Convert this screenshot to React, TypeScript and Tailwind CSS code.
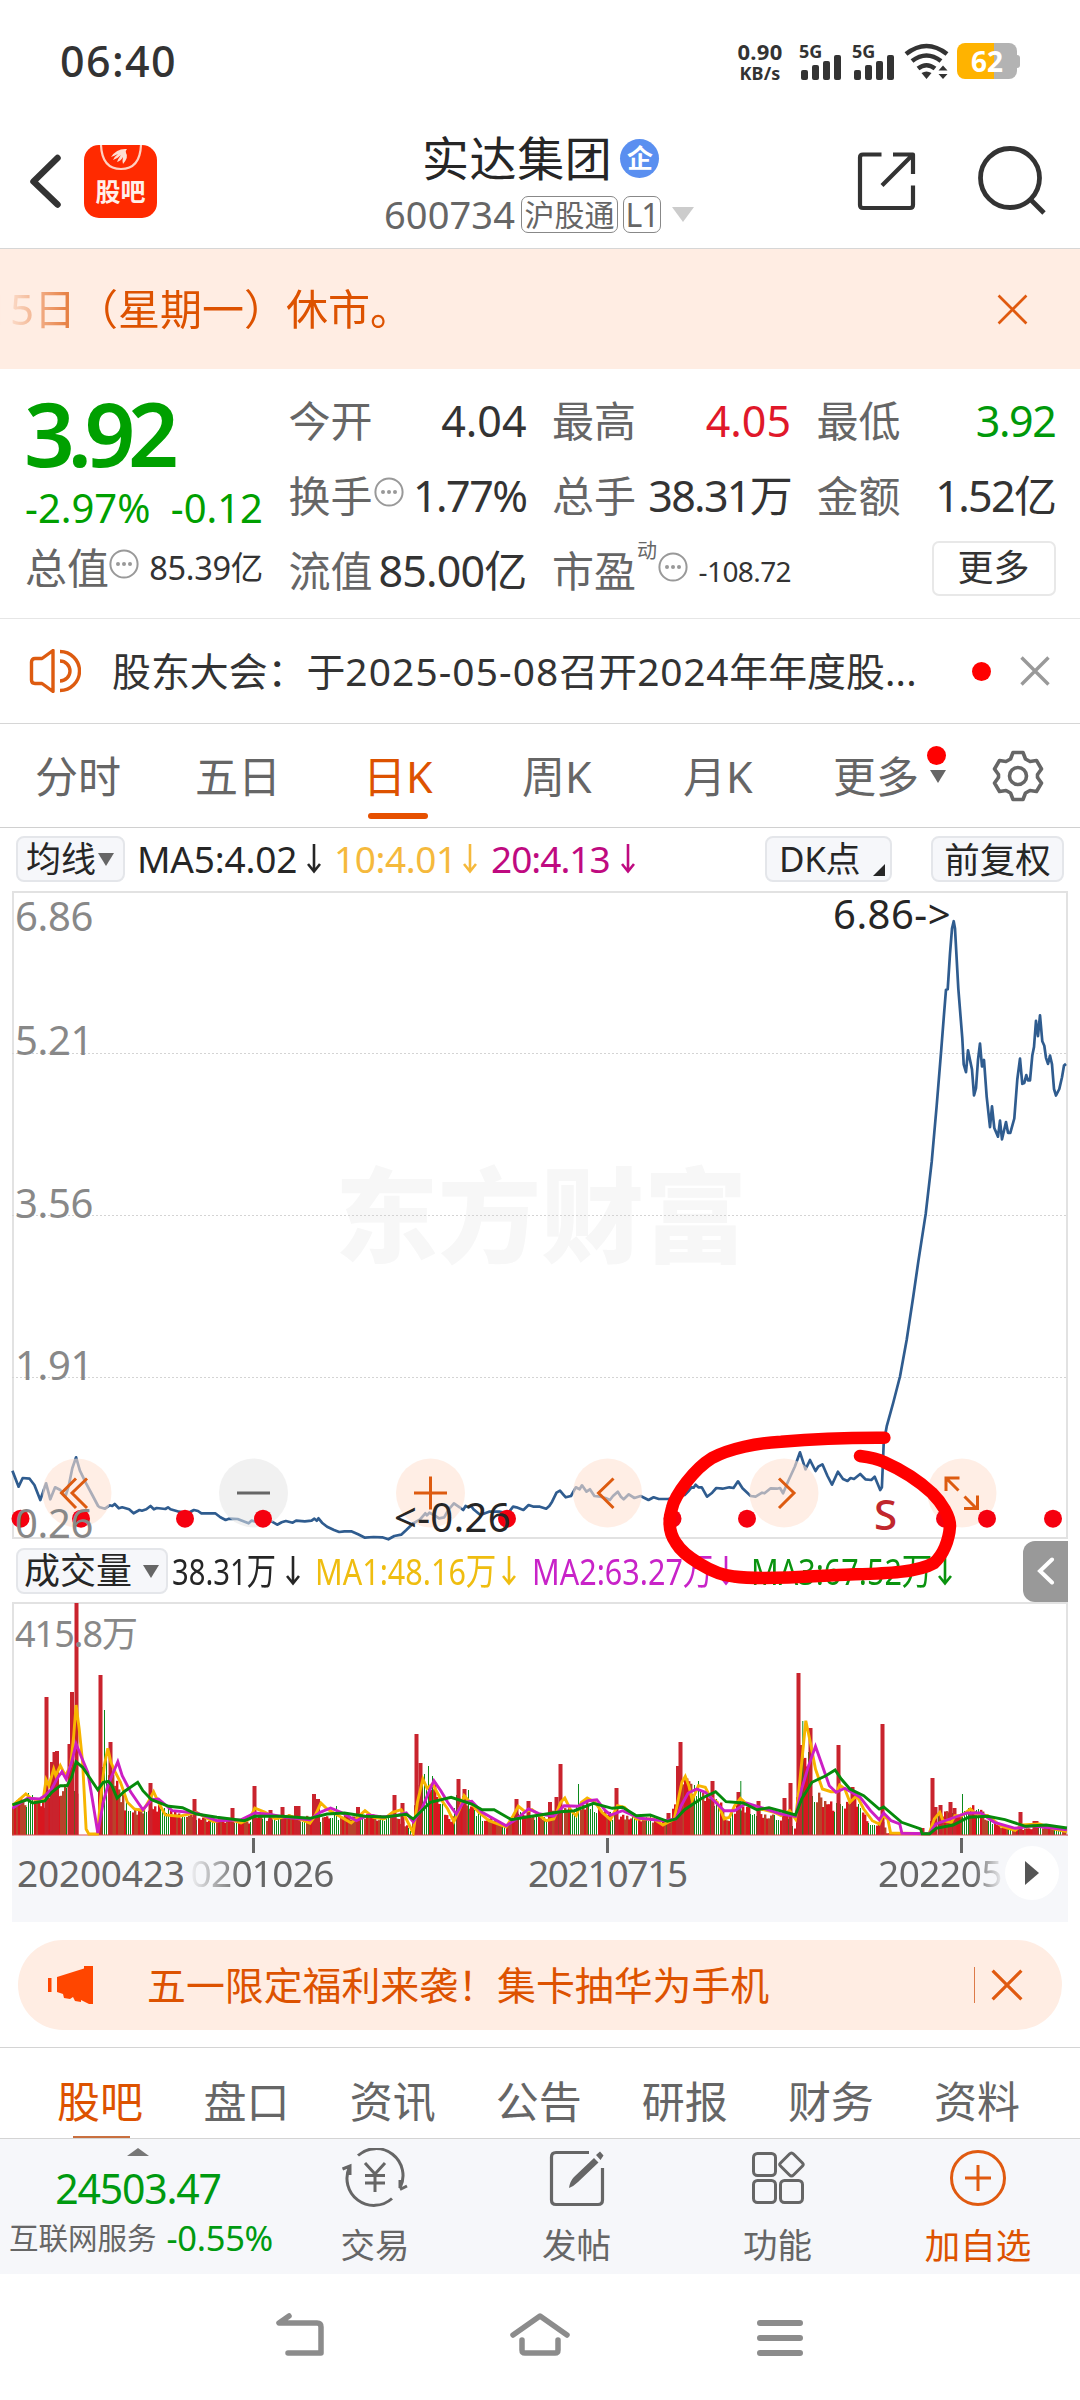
import React from "react";

type Pt = [number, number];

const F = "font-['Noto_Sans','Noto_Sans_CJK_SC',sans-serif]";

// Samples are stored in 2.904 x 3 units per pixel of the panel they belong to.
const left = (p: Pt[], oy: number): Pt[] => p.map(([x, y]) => [x / 2.904 - 12, y / 3 + oy]);
const right = (p: Pt[], oy: number): Pt[] => p.map(([x, y]) => [528 + x / 2.904, y / 3 + oy]);
const join = (p: Pt[]) => p.map(([x, y]) => `${x.toFixed(1)},${y.toFixed(1)}`).join(" ");

const priceA: Pt[] = [[36,212],[54,260],[66,234],[86,236],[100,255],[117,300],[134,250],[146,298],[160,262],[175,270],[190,290],[200,255],[210,205],[221,172],[232,212],[250,250],[268,285],[285,318],[290,322],[305,326],[318,316],[326,318],[333,312],[345,325],[355,322],[375,328],[388,340],[405,330],[412,332],[425,328],[437,318],[447,328],[455,324],[480,327],[488,322],[495,328],[520,335],[545,340],[563,330],[575,333],[585,340],[625,340],[640,352],[655,360],[665,356],[690,357],[722,370],[730,362],[740,364],[760,360],[790,365],[805,374],[818,367],[830,363],[850,368],[860,362],[885,364],[905,362],[913,356],[920,362],[925,355],[935,368],[950,380],[970,390],[985,396],[1000,394],[1020,394],[1040,403],[1060,413],[1085,411],[1110,412],[1128,418],[1145,408],[1165,404],[1180,390],[1200,370],[1220,358],[1235,340],[1240,346],[1247,338],[1262,346],[1275,355],[1290,352],[1302,330],[1318,310],[1335,322],[1345,330],[1352,318],[1360,322],[1368,318],[1375,328],[1395,345],[1420,335],[1450,335],[1475,340],[1490,320],[1500,322],[1520,330],[1535,315],[1550,320],[1568,320]];
const priceB: Pt[] = [[18,326],[27,318],[35,305],[48,278],[58,272],[67,283],[75,292],[90,288],[104,262],[115,268],[122,256],[135,275],[145,268],[158,288],[175,290],[190,294],[203,300],[212,288],[226,275],[235,290],[243,298],[258,283],[274,294],[292,288],[315,300],[330,292],[345,297],[372,297],[395,292],[420,285],[432,272],[440,262],[446,263],[452,254],[460,262],[470,262],[485,290],[500,278],[512,264],[530,266],[550,262],[562,264],[575,244],[588,265],[612,288],[626,290],[645,278],[652,280],[670,265],[688,266],[697,264],[706,280],[720,245],[740,200],[755,157],[771,208],[784,180],[800,213],[808,200],[820,193],[835,228],[848,254],[865,215],[880,237],[893,243],[902,234],[912,237],[930,222],[945,238],[962,240],[972,230],[988,270],[993,262],[998,130]];
const priceC: Pt[] = [[320,1260],[340,1205],[360,1145],[380,1060],[400,960],[415,880],[437,770],[455,650],[470,520],[484,390],[492,310],[498,253],[503,252],[510,170],[516,112],[521,95],[525,112],[535,250],[547,365],[551,425],[558,443],[564,393],[576,437],[582,497],[588,480],[594,415],[600,377],[606,430],[612,415],[620,500],[630,570],[636,522],[643,572],[654,592],[660,555],[666,598],[678,558],[684,583],[691,583],[703,550],[712,460],[720,412],[727,470],[733,468],[739,450],[744,462],[750,462],[757,405],[762,385],[768,325],[774,360],[780,312],[787,372],[793,382],[798,410],[804,424],[810,405],[816,425],[822,482],[828,497],[838,482],[846,455],[852,428],[858,424]];
const price: Pt[] = [
  ...left(priceA, 509),
  ...right(priceB, 509),
  ...priceC.map(([x, y]): Pt => [768 + x / 3, y / 2.306 - 11]),
];

const yellow: Pt[] = [
  ...left([[36,650],[75,615],[90,628],[125,635],[134,572],[142,590],[156,540],[162,560],[175,530],[190,560],[205,530],[214,440],[221,348],[230,420],[240,520],[250,720],[258,735],[283,735],[290,650],[303,530],[313,478],[322,520],[335,550],[350,580],[370,640],[390,660],[415,665],[430,640],[446,608],[460,640],[480,678],[520,682],[570,670],[620,698],[665,690],[700,702],[725,690],[740,657],[770,670],[800,690],[840,680],[870,690],[900,703],[915,680],[932,642],[950,660],[980,678],[1020,702],[1060,665],[1085,685],[1115,690],[1140,670],[1165,662],[1180,690],[1200,732],[1212,640],[1228,570],[1240,598],[1256,585],[1280,630],[1300,660],[1318,698],[1335,660],[1348,620],[1365,640],[1390,670],[1420,695],[1470,714],[1490,680],[1505,652],[1525,668],[1545,662],[1568,680]], -13),
  ...right([[17,695],[40,690],[60,640],[72,627],[90,665],[105,680],[120,640],[137,627],[160,640],[180,670],[205,692],[225,650],[245,655],[280,690],[330,690],[357,708],[390,690],[400,640],[412,580],[422,562],[432,590],[442,633],[460,590],[480,595],[495,625],[515,640],[535,690],[550,685],[565,650],[582,628],[600,645],[640,660],[680,670],[700,680],[725,665],[742,690],[752,600],[762,500],[772,395],[785,460],[800,540],[820,600],[845,608],[862,608],[870,588],[885,600],[900,640],[920,620],[940,660],[965,695],[985,705],[995,680],[1010,690],[1018,732],[1130,734],[1145,690],[1161,670],[1170,695],[1195,700],[1205,680],[1225,680],[1250,660],[1265,675],[1300,680],[1340,712],[1380,724],[1400,708],[1450,705],[1500,722],[1530,728]], -13),
];
const magenta: Pt[] = [
  ...left([[36,658],[80,628],[115,630],[130,620],[150,600],[165,570],[180,548],[192,570],[208,520],[221,465],[235,500],[255,550],[268,630],[284,732],[300,640],[312,595],[325,560],[342,518],[355,560],[380,610],[415,662],[440,632],[460,630],[500,665],[570,672],[630,695],[700,692],[740,672],[780,676],[830,685],[900,692],[930,670],[960,657],[990,670],[1035,695],[1070,678],[1110,684],[1150,680],[1180,672],[1200,698],[1225,660],[1245,610],[1260,575],[1280,605],[1300,640],[1325,675],[1345,640],[1370,637],[1400,670],[1470,710],[1500,690],[1535,660],[1568,675]], -13),
  ...right([[40,682],[70,650],[110,652],[140,635],[165,632],[190,665],[205,678],[240,665],[290,688],[360,695],[395,690],[410,650],[430,612],[455,600],[480,610],[510,640],[535,665],[565,665],[600,642],[640,655],[700,675],[742,682],[760,600],[780,530],[800,472],[815,515],[840,590],[860,610],[885,598],[930,625],[960,665],[985,692],[998,672],[1020,695],[1045,705],[1051,733],[1130,734],[1150,705],[1190,690],[1240,672],[1280,672],[1320,700],[1380,718],[1430,710],[1530,722]], -13),
];
const green: Pt[] = [
  ...left([[36,648],[80,632],[95,642],[130,636],[150,610],[175,590],[195,590],[208,565],[221,518],[240,535],[284,602],[300,580],[315,577],[325,590],[340,628],[360,608],[400,580],[415,605],[440,632],[490,652],[530,656],[570,675],[630,685],[710,695],[740,682],[820,682],[900,688],[950,675],[1000,672],[1060,682],[1120,684],[1180,676],[1200,690],[1250,640],[1310,625],[1370,645],[1400,662],[1435,662],[1485,692],[1530,684],[1568,678]], -13),
  ...right([[60,668],[100,665],[155,643],[210,658],[240,655],[280,680],[320,678],[370,697],[395,690],[420,662],[470,628],[510,608],[540,638],[590,642],[630,662],[665,656],[742,678],[760,630],[790,580],[830,560],[857,543],[875,570],[900,600],[940,620],[985,660],[998,654],[1050,700],[1105,720],[1110,734],[1132,734],[1150,718],[1200,708],[1245,685],[1300,682],[1350,692],[1410,712],[1470,708],[1530,717]], -13),
];

// Volume: a base envelope plus the single-day spikes that stand above it.
const envelope: Pt[] = [[0,33],[12,42],[30,36],[42,38],[50,55],[58,52],[62,66],[65,50],[66.5,0],[85,0],[87,55],[95,80],[103,62],[110,40],[120,26],[132,32],[150,30],[165,22],[200,18],[230,16],[270,20],[300,18],[340,22],[380,18],[390,16],[400,3],[405,60],[418,60],[425,45],[438,16],[446,42],[460,36],[470,20],[495,10],[505,24],[528,18],[545,26],[560,30],[580,32],[600,22],[640,18],[658,14],[666,60],[690,46],[705,42],[716,16],[728,32],[750,24],[775,20],[784,8],[786,80],[795,100],[800,50],[812,34],[830,32],[842,44],[850,30],[860,10],[872,14],[874,2],[918,2],[920,26],[945,24],[960,30],[975,20],[990,8],[1010,6],[1040,9],[1056,7]];
const spikes: [number, number, string][] = [[34.5,138,"r"],[40,73,"r"],[42.5,83,"r"],[45,84,"r"],[57.5,91,"r"],[60,143,"r"],[64.5,232,"r"],[88.5,160,"r"],[92.5,125,"g"],[98.5,93,"r"],[138.5,52,"r"],[182.5,36,"r"],[220.5,27,"r"],[242.5,49,"r"],[258.5,25,"r"],[270.5,28,"r"],[284,29,"r"],[286.5,29,"r"],[302,41,"r"],[306,36,"r"],[324.5,29,"g"],[346,28,"r"],[382.5,40,"r"],[390.5,32,"r"],[404.5,101,"r"],[408.5,72,"r"],[416.5,69,"g"],[420.5,59,"g"],[446.5,56,"r"],[452.5,46,"r"],[456.5,45,"g"],[504.5,36,"r"],[516.5,34,"r"],[538,33,"r"],[544.5,38,"r"],[548.5,71,"r"],[566.5,51,"g"],[604.5,47,"r"],[656.5,22,"r"],[666,69,"r"],[668.5,93,"r"],[686.5,54,"g"],[700.5,54,"r"],[726.5,43,"r"],[728.8,54,"g"],[746.5,34,"r"],[772.5,37,"r"],[778.5,52,"r"],[786.5,162,"r"],[789.5,90,"r"],[790.8,114,"g"],[798.5,107,"r"],[826.5,90,"r"],[840.5,48,"r"],[870.5,111,"r"],[910.5,7,"r"],[920.5,57,"r"],[923.5,28,"r"],[928.5,30,"r"],[938.5,33,"r"],[942.5,27,"r"],[950.5,41,"g"],[956.5,27,"g"],[1008.5,23,"r"],[1022.5,14,"r"],[1024.5,14,"r"]];

const heightAt = (x: number) => {
  for (let i = 1; i < envelope.length; i++) {
    if (x <= envelope[i][0]) {
      const [x0, y0] = envelope[i - 1];
      const [x1, y1] = envelope[i];
      return y0 + ((y1 - y0) * (x - x0)) / (x1 - x0);
    }
  }
  return 6;
};

function VolumeBars() {
  const bars: React.ReactNode[] = [];
  let seed = 11;
  const rnd = () => {
    seed = (seed * 1103515245 + 12345) % 2147483648;
    return seed / 2147483648;
  };
  let run = 0;
  let up = false;
  for (let x = 1; x < 1055; x += 2) {
    if (run <= 0) {
      up = !up;
      run = up ? 3 + Math.floor(rnd() * 7) : 2 + Math.floor(rnd() * 4);
    }
    run--;
    const base = heightAt(x);
    const h = base * (0.68 + rnd() * 0.38);
    if (base < 0.5) continue;
    const isUp = up || base < 4;
    bars.push(
      isUp ? (
        <rect key={x} x={x - 1} y={233 - h} width={2.4} height={h} fill={rnd() > 0.6 ? "#b8432a" : "#d8161f"} />
      ) : (
        <rect key={x} x={x - 1} y={233 - h} width={1} height={h} fill="#0b8a1c" shapeRendering="crispEdges" />
      ),
    );
  }
  spikes.forEach(([x, h, c]) =>
    bars.push(<rect key={`s${x}`} x={c === "r" ? x - 2 : x - 0.5} y={233 - h} width={c === "r" ? 4 : 1} height={h} fill={c === "r" ? "#c9232d" : "#0b8a1c"} />),
  );
  return <g>{bars}</g>;
}

function Dots({ className = "" }: { className?: string }) {
  return (
    <svg viewBox="0 0 30 30" className={`size-[30px] shrink-0 ${className}`}>
      <circle cx="15" cy="15" r="13.6" fill="none" stroke="#999" strokeWidth="2" />
      <circle cx="9" cy="15" r="2" fill="#999" />
      <circle cx="15" cy="15" r="2" fill="#999" />
      <circle cx="21" cy="15" r="2" fill="#999" />
    </svg>
  );
}

function Signal({ className = "" }: { className?: string }) {
  return (
    <div className={`relative h-[38px] w-[42px] ${className}`}>
      <span className="absolute top-0 left-0 text-[18px] leading-[16px] font-bold">5G</span>
      <svg viewBox="0 0 42 38" className="absolute inset-0" fill="#333">
        <rect x="2" y="27" width="7" height="10" rx="2" />
        <rect x="13" y="22" width="7" height="15" rx="2" />
        <rect x="24" y="18" width="7" height="19" rx="2" />
        <rect x="35" y="12" width="7" height="25" rx="2" />
      </svg>
    </div>
  );
}

function StatusBar() {
  return (
    <div className="flex h-[112px] items-start pt-[43px] text-[#333]">
      <div className="ml-[60px] w-[676px] text-[43px] leading-[36px] font-medium tracking-[1.4px]">06:40</div>
      <div className="-mt-[3px] w-[48px] text-center font-bold">
        <div className="text-[22px] leading-[23px] tracking-[0.3px]">0.90</div>
        <div className="text-[18px] leading-[20px] tracking-[0.2px]">KB/s</div>
      </div>
      <Signal className="ml-[15px]" />
      <Signal className="ml-[11px]" />
      <svg viewBox="0 0 46 38" className="ml-[10px] h-[38px] w-[46px]" fill="none" stroke="#333" strokeWidth="4.6">
        <path d="M2 11Q22.500-5 43 11M8 18Q22.500 7 37 18M14 25.500Q22.500 19 31 25.500" />
        <path d="M17.500 30Q22.500 27 27.500 30L22.500 36ZM34.500 27.500L39 22.500L43.500 27.500ZM34.500 31L39 36L43.500 31Z" fill="#333" stroke="none" />
      </svg>
      <div className="ml-[7px] flex items-center">
        <div className="h-[36px] w-[60px] rounded-[8px] bg-[linear-gradient(90deg,#ffb300_62%,#b3b3b3_62%)] text-center text-[28px] leading-[36px] font-bold text-white">62</div>
        <div className="h-[13px] w-[3px] rounded-r bg-[#b3b3b3]" />
      </div>
    </div>
  );
}

function Header() {
  return (
    <div className="relative flex h-[137px] items-start border-b border-[#d6d6d6]">
      <svg viewBox="0 0 36 60" className="mt-[40px] ml-[28px] h-[60px] w-[36px]" fill="none" stroke="#333" strokeWidth="6.500" strokeLinecap="round">
        <path d="M29.500 6L5.500 29.500L29.500 52.500" strokeLinejoin="round" />
      </svg>
      <div className="mt-[33px] ml-[20px] flex h-[73px] w-[73px] flex-col items-center rounded-[15px] bg-[#ff2a00]">
        <svg viewBox="0 0 44 26" className="h-[26px] w-[44px]" fill="none">
          <path d="M2 0Q3 24 22 24Q41 24 42 0" stroke="#ffd0c0" strokeWidth="2.200" />
          <path d="M12 12Q18 3 28 4Q26 6 27 8Q30 12 24 19Q23 16 24 12Q22 16 18 17Q19 14 22 10Q18 14 14 15Q15 12 19 9Q15 11 12 12Z" fill="#ffe0d5" />
        </svg>
        <div className="mt-[4px] text-[25px] leading-[32px] font-bold text-[#fff0ea]">股吧</div>
      </div>
      <div className="mt-[19px] ml-[227px] w-[316px]">
        <div className="flex h-[54px] items-center pl-[38px]">
          <span className="text-[47px] leading-[54px] tracking-[0.6px] text-[#262626]">实达集团</span>
          <span className="ml-[8px] flex size-[39px] items-center justify-center rounded-full bg-[#5a8ff0] text-[26px] leading-[38px] font-bold text-white">企</span>
        </div>
        <div className="mt-[11px] flex h-[37px] items-center text-[#666]">
          <span className="text-[38px] leading-[37px] tracking-[0.1px]">600734</span>
          <span className="ml-[6px] h-[37px] w-[97px] rounded-[7px] border border-[#888] text-center text-[30px] leading-[36px] whitespace-nowrap">沪股通</span>
          <span className="ml-[5px] h-[37px] w-[38px] rounded-[7px] border border-[#888] text-center text-[32px] leading-[35px] tracking-[-1px]">L1</span>
          <svg viewBox="0 0 22 15" className="ml-[11px] h-[15px] w-[22px]"><path d="M0 0H22L11 15Z" fill="#ccc" /></svg>
        </div>
      </div>
      <svg viewBox="0 0 60 60" className="mt-[40px] ml-[157px] size-[60px]" fill="none" stroke="#333" strokeWidth="4.200" strokeLinejoin="round">
        <path d="M24.500 2.500H6Q3 2.500 3 5.500V53Q3 56 6 56H53Q56 56 56 53V33.500M36 2.500H56V22M56 2.500L25 33.500" />
      </svg>
      <svg viewBox="0 0 72 72" className="mt-[33px] ml-[60px] size-[72px]" fill="none" stroke="#333" strokeWidth="4.800">
        <circle cx="33" cy="33" r="29.500" />
        <path d="M53 54L67 68" />
      </svg>
    </div>
  );
}

function Cross({ className, color, w = 2.6 }: { className: string; color: string; w?: number }) {
  return (
    <svg viewBox="0 0 30 30" className={className} fill="none" stroke={color} strokeWidth={w}>
      <path d="M1.500 1.500L28.500 28.500M28.500 1.500L1.500 28.500" />
    </svg>
  );
}

const label = "text-[42px] leading-[44px] text-[#666] whitespace-nowrap";
const value = "ml-auto text-[43px] leading-[44px] whitespace-nowrap";

function Quote() {
  return (
    <div className="grid h-[250px] grid-cols-[238px_238px_239px_239px] gap-x-[25.500px] border-b border-[#e6e6e6] pt-[14px] pl-[25px]">
      <div className="flex flex-col text-[#00a000]">
        <div className="-ml-px pt-[5px] text-[89px] leading-[90px] font-semibold tracking-[-7.500px]">3.92</div>
        <div className="flex h-[58px] justify-between pt-[2px] text-[40px] leading-[56px]">
          <span>-2.97%</span><span>-0.12</span>
        </div>
        <div className="mt-[7px] flex h-[50px] items-center">
          <span className={label}>总值</span>
          <Dots className="mb-[8px]" />
          <span className="ml-auto text-[32.500px] leading-[44px] tracking-[-0.3px] text-[#333]">85.39亿</span>
        </div>
      </div>
      <div>
        <div className="flex h-[75px] items-center"><span className={label}>今开</span><span className={`${value} text-[#333]`}>4.04</span></div>
        <div className="flex h-[75px] items-center"><span className={label}>换手</span><Dots className="ml-[1px] mb-[8px]" /><span className={`${value} tracking-[-1.5px] text-[#333]`}>1.77%</span></div>
        <div className="flex h-[75px] items-center"><span className={label}>流值</span><span className={`${value} tracking-[-0.8px] text-[#333]`}>85.00亿</span></div>
      </div>
      <div>
        <div className="flex h-[75px] items-center"><span className={label}>最高</span><span className={`${value} text-[#e0182a]`}>4.05</span></div>
        <div className="flex h-[75px] items-center"><span className={label}>总手</span><span className={`${value} tracking-[-1.7px] text-[#333]`}>38.31万</span></div>
        <div className="flex h-[75px] items-center">
          <span className={label}>市盈</span>
          <span className="mb-[40px] ml-[1px] text-[20px] leading-[22px] text-[#666]">动</span>
          <Dots className="mb-[8px] ml-[1px]" />
          <span className="ml-auto text-[28px] leading-[44px] tracking-[-0.6px] text-[#333]">-108.72</span>
        </div>
      </div>
      <div>
        <div className="flex h-[75px] items-center"><span className={label}>最低</span><span className={`${value} tracking-[-1.4px] text-[#00990a]`}>3.92</span></div>
        <div className="flex h-[75px] items-center"><span className={label}>金额</span><span className={`${value} tracking-[-1.6px] text-[#333]`}>1.52亿</span></div>
        <div className="flex h-[75px] items-center">
          <span className="mb-[4px] ml-auto h-[55px] w-[124px] rounded-[7px] border-2 border-[#e8e8e8] text-center text-[36px] leading-[50px] text-[#333]">更多</span>
        </div>
      </div>
    </div>
  );
}

function Notice() {
  return (
    <div className="flex h-[105px] items-center border-b border-[#d6d6d6]">
      <svg viewBox="0 0 52 44" className="ml-[29px] h-[44px] w-[52px]" fill="none" stroke="#dd5b10" strokeWidth="3.400" strokeLinejoin="round">
        <path d="M13 9.500H6Q2.500 9.500 2.500 13V31Q2.500 34.500 6 34.500H13L24 42.500V1.500Z" />
        <path d="M31 2.500A19.500 19.500 0 0 1 31 41.500M31 12A10 10 0 0 1 31 32" />
      </svg>
      <span className="ml-[31px] w-[810px] text-[38.900px] leading-[50px] whitespace-nowrap text-[#333]">
        股东大会：于<span className="tracking-[1.100px]">2025-05-08</span>召开<span className="tracking-[0.800px]">2024</span>年年度股<span className="tracking-[0.300px]">...</span>
      </span>
      <span className="ml-[50px] size-[19px] rounded-full bg-[#f00]" />
      <Cross className="ml-[29px] size-[30px]" color="#999" w={3.4} />
    </div>
  );
}

function PeriodTabs() {
  const t = "text-[43px] leading-[56px] whitespace-nowrap";
  return (
    <div className="relative flex h-[104px] items-center border-b border-[#d0d0d0] pt-[2px] text-[#666]">
      <span className={`ml-[35px] w-[160px] ${t}`}>分时</span>
      <span className={`w-[168px] ${t}`}>五日</span>
      <span className={`w-[159px] ${t} text-[#dd5200]`}>日K</span>
      <span className={`w-[161px] ${t}`}>周K</span>
      <span className={`w-[150px] ${t}`}>月K</span>
      <span className={`w-[97px] ${t}`}>更多</span>
      <svg viewBox="0 0 16 13" className="h-[13px] w-[16px]"><path d="M0 0H16L8 13Z" fill="#666" /></svg>
      <svg viewBox="0 0 52 52" className="mb-[2px] ml-[46px] size-[52px]" fill="none" stroke="#666" strokeWidth="3.600" strokeLinejoin="round">
        <path d="M21 2.500H31L33.500 9L38 11.500L44.500 10.500L49.500 19L45.500 24.500V27.500L49.500 33L44.500 41.500L38 40.500L33.500 43L31 49.500H21L18.500 43L14 40.500L7.500 41.500L2.500 33L6.500 27.500V24.500L2.500 19L7.500 10.500L14 11.500L18.500 9Z" />
        <circle cx="26" cy="26" r="8.500" />
      </svg>
      <span className="absolute top-[89px] left-[368px] h-[6px] w-[60px] rounded-full bg-[#e65000]" />
      <span className="absolute top-[22px] left-[927px] size-[19px] rounded-full bg-[#f00]" />
    </div>
  );
}

const chip = "flex h-[46px] items-center rounded-[8px] border-2 border-[#e4e6ea] bg-[#f6f7fa] text-[#262626]";

function Arrow({ color, className = "" }: { color: string; className?: string }) {
  return (
    <svg viewBox="0 0 14 30" className={`h-[30px] w-[14px] shrink-0 ${className}`} fill="none" stroke={color} strokeWidth="2.600">
      <path d="M7 0V27M1 20L7 27.500L13 20" />
    </svg>
  );
}

function AverageRow() {
  const t = "text-[37px] leading-[46px] whitespace-nowrap";
  return (
    <div className="flex h-[63px] items-center pb-[1px]">
      <div className={`ml-[16px] w-[109px] pl-[8px] ${chip}`}>
        <span className="text-[35px] leading-[40px]">均线</span>
        <svg viewBox="0 0 16 13" className="ml-[2px] h-[13px] w-[16px]"><path d="M0 0H16L8 13Z" fill="#666" /></svg>
      </div>
      <span className={`ml-[12px] w-[170px] tracking-[-0.200px] text-[#262626] ${t}`}>MA5:4.02</span><Arrow color="#262626" />
      <span className={`ml-[13px] w-[129px] tracking-[-0.400px] text-[#f5b93c] ${t}`}>10:4.01</span><Arrow color="#f5b93c" />
      <span className={`ml-[14px] w-[130px] tracking-[-1px] text-[#bf0a80] ${t}`}>20:4.13</span><Arrow color="#bf0a80" />
      <div className={`relative ml-[130px] w-[127px] pl-[12px] ${chip}`}>
        <span className="text-[35px] leading-[40px] tracking-[-0.3px]">DK点</span>
        <svg viewBox="0 0 12 12" className="absolute right-[5px] bottom-[4px] size-[12px]"><path d="M12 0V12H0Z" fill="#262626" /></svg>
      </div>
      <div className={`ml-[39px] w-[133px] justify-center ${chip}`}><span className="text-[35.500px] leading-[40px] whitespace-nowrap">前复权</span></div>
    </div>
  );
}

const axis = "absolute left-[2px] text-[40px] leading-[40px] tracking-[-0.300px] text-[#888]";

function PriceChart() {
  return (
    <div className="relative mx-[12px] h-[648px] border-2 border-[#e2e2e2]">
      <div className="absolute -top-px -left-px h-[646px] w-[1056px]">
        <div className="absolute top-[265px] left-[322px] text-[103px] leading-[116px] font-black whitespace-nowrap text-[#f7f7f7]">东方财富</div>
        <svg viewBox="0 0 1056 648" className="absolute -top-px -left-px h-[648px] w-[1056px] overflow-visible" fill="none">
          {[162, 324, 486].map((y) => <path key={y} d={`M0 ${y}.5H1056`} stroke="#d4d4d4" strokeWidth="1" strokeDasharray="2 2" />)}
          <polyline points={join(price)} stroke="#2f5c8f" strokeWidth="2.700" strokeLinejoin="round" />
          {[65, 418.5, 595.5, 772, 950].map((x) => <circle key={x} cx={x} cy="602" r="34.500" fill="#ffe3d3" fillOpacity="0.6" />)}
          <circle cx="241.500" cy="602" r="34.500" fill="#e6e6e6" fillOpacity="0.55" />
          {[8.5, 69, 173, 251, 495, 660.5, 735, 933, 975, 1041].map((x) => <circle key={x} cx={x} cy="627.700" r="9" fill="#f5000f" />)}
          <g stroke="#dd5b10" strokeWidth="3">
            <path d="M64 587.500L49.500 602L64 617M75 587.500L60 602L75 617" />
            <path d="M402 602H435M418.500 585.500V618.500" />
            <path d="M601.500 587.500L586.500 602L601.500 617" />
            <path d="M767 587.500L782 602L767 617" />
            <path d="M934 600V587H947.500M934.500 587.500L946.500 599.500M952.500 605.500L965 618M965.500 604.500V617.500H952" />
          </g>
          <path d="M225 602H258" stroke="#666" strokeWidth="3" />
        </svg>
        <span className={`${axis} top-[4px]`}>6.86</span>
        <span className={`${axis} top-[128px]`}>5.21</span>
        <span className={`${axis} top-[291px]`}>3.56</span>
        <span className={`${axis} top-[453px]`}>1.91</span>
        <span className={`${axis} top-[611px]`}>0.26</span>
        <span className="absolute top-[2px] left-[820px] text-[40px] leading-[40px] tracking-[0.500px] whitespace-nowrap text-[#262626]">6.86-&gt;</span>
        <span className="absolute top-[605px] left-[381px] text-[40px] leading-[40px] tracking-[0.300px] whitespace-nowrap text-[#262626]">&lt;-0.26</span>
        <span className="absolute top-[601px] left-[861px] text-[42px] leading-[42px] font-medium text-[#c1272d]">S</span>
        <svg viewBox="0 0 1056 648" className="absolute -top-px -left-px z-10 h-[648px] w-[1056px] overflow-visible" fill="none">
          <path
            d="M872.400 546.700C840 546.500 800 548 769 550.700C745 552 718 557.500 700 567C682 578 663 604 660 617C656 630 657 642 664 652C671 664 700 684 722 685.500C755 690 810 684 838 683.500C870 682.500 905 682 922 672C931 664 937 650 938 635C938 625 930 612 920 602C905 588 890 579 872 571C864 567 856 566 848 565"
            stroke="#f00"
            strokeWidth="12.500"
            strokeLinecap="round"
            strokeLinejoin="round"
          />
        </svg>
      </div>
    </div>
  );
}

function VolumeValue({ text, color, w, scale, className }: { text: string; color: string; w: string; scale: string; className: string }) {
  return (
    <div className={`flex items-center ${className}`} style={{ color }}>
      <div className={w}>
        <span className={`inline-block origin-left text-[37px] leading-[46px] whitespace-nowrap ${scale}`}>{text}</span>
      </div>
      <Arrow color={color} />
    </div>
  );
}

function VolumeRow() {
  return (
    <div className="flex h-[63px] items-center pt-[1px]">
      <div className={`ml-[16px] w-[152px] pl-[6px] ${chip}`}>
        <span className="text-[36px] leading-[40px]">成交量</span>
        <svg viewBox="0 0 16 13" className="ml-[11px] h-[13px] w-[16px]"><path d="M0 0H16L8 13Z" fill="#666" /></svg>
      </div>
      <VolumeValue text="38.31万" color="#262626" w="w-[114px]" scale="scale-x-[0.79]" className="ml-[4px]" />
      <VolumeValue text="MA1:48.16万" color="#efbd10" w="w-[187px]" scale="scale-x-[0.825]" className="ml-[15px]" />
      <VolumeValue text="MA2:63.27万" color="#c823c8" w="w-[187px]" scale="scale-x-[0.825]" className="ml-[16px]" />
      <VolumeValue text="MA3:67.52万" color="#0a930f" w="w-[187px]" scale="scale-x-[0.825]" className="ml-[18px]" />
      <div className="mr-[12px] ml-auto flex h-[61px] w-[45px] items-center justify-center rounded-l-[12px] bg-[#999]">
        <svg viewBox="0 0 18 28" className="h-[28px] w-[18px]" fill="none" stroke="#fff" strokeWidth="4" strokeLinecap="round"><path d="M15 2.500L3 14L15 25.500" /></svg>
      </div>
    </div>
  );
}

function VolumeChart() {
  const d = "absolute top-[17px] text-[37px] leading-[40px] text-[#666]";
  return (
    <div className="mx-[12px]">
      <div className="relative h-[234px] border-2 border-b-0 border-[#e2e2e2]">
        <svg viewBox="0 0 1056 234" className="absolute -top-[2px] -left-[2px] h-[234px] w-[1056px]" fill="none">
          <VolumeBars />
          <path d="M0 233H1056" stroke="#d8484f" />
          <polyline points={join(yellow)} stroke="#f7b500" strokeWidth="2.900" />
          <polyline points={join(magenta)} stroke="#cc1fc4" strokeWidth="2.900" />
          <polyline points={join(green)} stroke="#068a0c" strokeWidth="2.900" />
        </svg>
        <span className="absolute top-[10px] left-[1px] text-[36px] leading-[40px] tracking-[-1px] whitespace-nowrap text-[#888]">415.8万</span>
      </div>
      <div className="relative h-[86px] bg-[#f6f7fa]">
        <span className="absolute top-[2px] left-[240px] h-[15px] w-[3px] bg-[#666]" />
        <span className="absolute top-[2px] left-[594px] h-[15px] w-[3px] bg-[#666]" />
        <span className="absolute top-[2px] left-[948px] h-[15px] w-[3px] bg-[#666]" />
        <span className={`${d} left-[5px] tracking-[-0.200px]`}>20200423</span>
        <span className={`${d} left-[158px] tracking-[-0.700px] [mask-image:linear-gradient(90deg,transparent_18px,black_72px)]`}>20201026</span>
        <span className={`${d} left-[516px] tracking-[-1.300px]`}>20210715</span>
        <span className={`${d} left-[866px] tracking-[-0.500px] [mask-image:linear-gradient(90deg,black_96px,transparent_126px)]`}>202205</span>
        <span className="absolute top-[10px] left-[993px] flex size-[54px] items-center justify-center rounded-full bg-white">
          <svg viewBox="0 0 14 24" className="h-[24px] w-[14px]"><path d="M0 0L14 12L0 24Z" fill="#555" /></svg>
        </span>
      </div>
    </div>
  );
}

function Promo() {
  return (
    <div className="mx-[18px] mt-[18px] flex h-[90px] items-center rounded-full bg-[#ffede3] text-[#dd5200]">
      <svg viewBox="0 0 46 40" className="ml-[30px] h-[40px] w-[46px]" fill="#ff4600">
        <path d="M0 13H3.500V27H0ZM9 12L36 3.500V1H45V39H41L33 35V37L27 36L25 32L22 34L16 33L15 29L9 27Z" />
        <path d="M41 1H45V39H41Z" />
      </svg>
      <span className="ml-[53px] w-[827px] text-[38.900px] leading-[50px] whitespace-nowrap">五一限定福利来袭！集卡抽华为手机</span>
      <span className="h-[36px] w-px bg-[#dd7a48]" />
      <Cross className="ml-[16px] size-[32px]" color="#e05a10" w={3} />
    </div>
  );
}

function SectionTabs() {
  return (
    <div className="relative mt-[17px] flex h-[92px] border-y border-[#d4d4d4] pt-[26px] pl-[57px] text-[43px] leading-[56px] text-[#666]">
      {["股吧", "盘口", "资讯", "公告", "研报", "财务", "资料"].map((t, i) => (
        <span key={t} className={i === 0 ? "w-[147px] text-[#dd5200]" : "w-[146.500px]"}>{t}</span>
      ))}
      <span className="absolute bottom-0 left-[73px] h-[2px] w-[57px] bg-[#c97040]" />
    </div>
  );
}

function BottomBar() {
  const c = "flex flex-col items-center text-[34.500px] leading-[44px]";
  return (
    <div className="flex h-[135px] bg-[#f6f7fa]">
      <div className="flex w-[276px] flex-col items-center text-[#009a10]">
        <svg viewBox="0 0 22 8" className="mt-[9px] h-[8px] w-[22px]"><path d="M11 0L22 8H0Z" fill="#777" /></svg>
        <div className="mt-[7px] text-[41px] leading-[50px] tracking-[-1.200px]">24503.47</div>
        <div className="mt-[2px] ml-[9px] flex items-center self-start text-[34.500px] leading-[46px] tracking-[-0.300px] whitespace-nowrap">
          <span className="mr-[10px] text-[29.500px] tracking-normal text-[#666]">互联网服务</span>-0.55%
        </div>
      </div>
      <div className={`ml-[-2px] w-[202px] text-[#666] ${c}`}>
        <svg viewBox="0 0 66 60" className="mt-[9px] h-[60px] w-[66px]" fill="none" stroke="#666" strokeWidth="3">
          <path d="M16 7.500A27 27 0 0 1 58 40M58 40V32M58 41.500L65 38M50 50.500A27 27 0 0 1 7.500 19M0.500 21L8 18V27" />
          <path d="M23 15L33 26L43 15M23 27.500H43M23 35H43M33 26V44" />
        </svg>
        <span className="mt-[15px]">交易</span>
      </div>
      <div className={`w-[201px] text-[#666] ${c}`}>
        <svg viewBox="0 0 60 60" className="mt-[9px] size-[60px]" fill="none" stroke="#666" strokeWidth="3.200">
          <path d="M42 4.500H9Q4.500 4.500 4.500 9V52Q4.500 56.500 9 56.500H51Q55.500 56.500 55.500 52V20" />
          <path d="M22 40Q23 33 27 29L47 10L51.500 14.500L31 34Q27 38 22 40ZM49 7L53 3.500L56.500 7.500L53.500 12Z" fill="#666" stroke="none" />
        </svg>
        <span className="mt-[15px]">发帖</span>
      </div>
      <div className={`w-[201px] text-[#666] ${c}`}>
        <svg viewBox="0 0 56 56" className="mt-[11px] size-[56px]" fill="none" stroke="#666" strokeWidth="3">
          <rect x="3.500" y="3.500" width="22" height="22" rx="4" />
          <rect x="3.500" y="30.500" width="22" height="22" rx="4" />
          <rect x="30.500" y="30.500" width="22" height="22" rx="4" />
          <path d="M39.500 4Q41.500 2 43.500 4L52.500 13Q54 14.500 52.500 16L43.500 25Q41.500 27 39.500 25L30.500 16Q29 14.500 30.500 13Z" />
        </svg>
        <span className="mt-[17px]">功能</span>
      </div>
      <div className={`w-[200px] text-[#dd5200] ${c}`}>
        <svg viewBox="0 0 60 60" className="mt-[9px] size-[60px]" fill="none" stroke="#e05a10" strokeWidth="3">
          <circle cx="30" cy="30" r="26.500" />
          <path d="M17 30H43M30 17V43" />
        </svg>
        <span className="mt-[15px] text-[35.500px]">加自选</span>
      </div>
    </div>
  );
}

function SystemNav() {
  return (
    <div className="flex h-[126px] items-start pt-[37px]">
      <svg viewBox="0 0 50 50" className="ml-[275px] size-[50px]" fill="none" stroke="#8c8c8c" strokeWidth="5.500" strokeLinecap="round" strokeLinejoin="round">
        <path d="M14 5L4 12H42Q46 12 46 16V42H13" />
      </svg>
      <svg viewBox="0 0 62 50" className="ml-[184px] h-[50px] w-[62px]" fill="none" stroke="#8c8c8c" strokeWidth="5.500" strokeLinecap="round" strokeLinejoin="round">
        <path d="M4 24L31 5L58 24M13 29V39Q13 42 16 42H46Q49 42 49 39V29" />
      </svg>
      <svg viewBox="0 0 50 50" className="ml-[184px] size-[50px]" fill="none" stroke="#8c8c8c" strokeWidth="6" strokeLinecap="round">
        <path d="M5 12H45M5 27H45M5 42H45" />
      </svg>
    </div>
  );
}

export default function App() {
  return (
    <div className={`flex h-[2400px] w-[1080px] flex-col overflow-hidden bg-white ${F}`}>
      <StatusBar />
      <Header />
      <div className="flex h-[120px] shrink-0 items-center overflow-hidden bg-[#ffede3] text-[#dd5200]">
        <span className="-ml-[14px] w-[1011px] text-[42px] leading-[50px] whitespace-nowrap [mask-image:linear-gradient(90deg,transparent_14px,black_110px)]">15日（星期一）休市。</span>
        <Cross className="size-[31px]" color="#e05a10" />
      </div>
      <Quote />
      <Notice />
      <PeriodTabs />
      <AverageRow />
      <PriceChart />
      <VolumeRow />
      <VolumeChart />
      <Promo />
      <SectionTabs />
      <BottomBar />
      <SystemNav />
    </div>
  );
}
